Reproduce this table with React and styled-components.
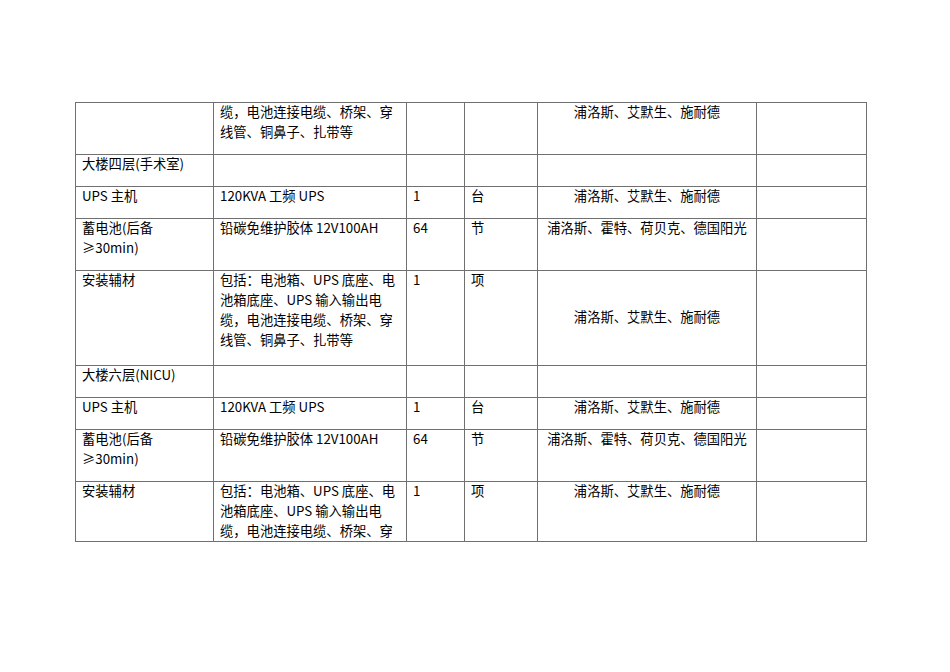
import styled, { createGlobalStyle } from "styled-components";

const Global = createGlobalStyle`
    html, body {
        margin: 0;
        padding: 0;
        background: #ffffff;
    }
`

const Page = styled.div`
    width: 950px;
    height: 672px;
    padding: 102px 0 0 75px;
    box-sizing: border-box;
    background: #ffffff;
    font-family: "Noto Sans CJK SC", "DejaVu Sans", sans-serif;
    font-size: 13.3px;
    color: #000;
`

const Sheet = styled.table`
    border-collapse: collapse;
    table-layout: fixed;
    width: 791px;
`

const Row = styled.tr`
    height: ${(p) => p.$h}px;
`

const Cell = styled.td`
    border: 1px solid #707070;
    padding: 0 6px;
    line-height: 20px;
    vertical-align: ${(p) => p.$valign || "top"};
    text-align: ${(p) => p.$align || "left"};
    white-space: nowrap;
    overflow: hidden;
`

const Text = styled.div`
    margin-top: -1.5px;
`

const SUPPLIERS_A = "浦洛斯、艾默生、施耐德";
const SUPPLIERS_B = "浦洛斯、霍特、荷贝克、德国阳光";

const rows = [
    { h: 52, cells: ["", ["缆，电池连接电缆、桥架、穿", "线管、铜鼻子、扎带等"], "", "", SUPPLIERS_A, ""] },
    { h: 32, cells: ["大楼四层(手术室)", "", "", "", "", ""] },
    { h: 32, cells: ["UPS 主机", "120KVA 工频 UPS", "1", "台", SUPPLIERS_A, ""] },
    { h: 52, cells: [["蓄电池(后备", "≥30min)"], "铅碳免维护胶体 12V100AH", "64", "节", SUPPLIERS_B, ""] },
    {
        h: 95,
        middle: true,
        cells: [
            "安装辅材",
            ["包括：电池箱、UPS 底座、电", "池箱底座、UPS 输入输出电", "缆，电池连接电缆、桥架、穿", "线管、铜鼻子、扎带等"],
            "1",
            "项",
            SUPPLIERS_A,
            "",
        ],
    },
    { h: 32, cells: ["大楼六层(NICU)", "", "", "", "", ""] },
    { h: 32, cells: ["UPS 主机", "120KVA 工频 UPS", "1", "台", SUPPLIERS_A, ""] },
    { h: 52, cells: [["蓄电池(后备", "≥30min)"], "铅碳免维护胶体 12V100AH", "64", "节", SUPPLIERS_B, ""] },
    {
        h: 59,
        cells: [
            "安装辅材",
            ["包括：电池箱、UPS 底座、电", "池箱底座、UPS 输入输出电", "缆，电池连接电缆、桥架、穿"],
            "1",
            "项",
            SUPPLIERS_A,
            "",
        ],
    },
]

const widths = [138, 193, 58, 73, 219, 110];

const Lines = ({ value }) =>
    Array.isArray(value)
        ? value.map((line, i) => (
              <span key={i}>
                  {line}
                  {i < value.length - 1 && <br />}
              </span>
          ))
        : value;

const App = () => {
    return (
        <Page>
            <Global />
            <Sheet>
                <colgroup>
                    {widths.map((w, i) => (
                        <col key={i} style={{ width: w }} />
                    ))}
                </colgroup>
                <tbody>
                    {rows.map((row, r) => (
                        <Row key={r} $h={row.h}>
                            {row.cells.map((c, i) => (
                                <Cell
                                    key={i}
                                    $align={i === 4 ? "center" : "left"}
                                    $valign={i === 4 && row.middle ? "middle" : "top"}
                                >
                                    <Text>
                                        <Lines value={c} />
                                    </Text>
                                </Cell>
                            ))}
                        </Row>
                    ))}
                </tbody>
            </Sheet>
        </Page>
    )
};

export default App;
